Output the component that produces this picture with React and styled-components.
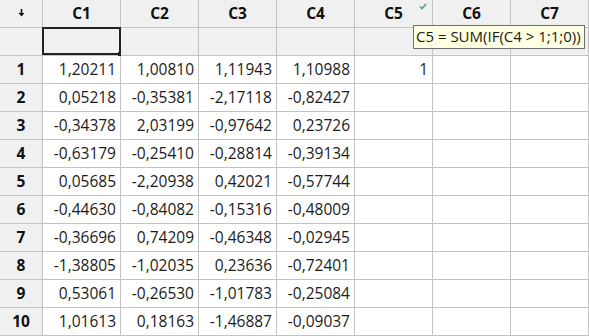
import React from "react";
import styled, { createGlobalStyle } from "styled-components";

const GlobalStyle = createGlobalStyle`
  html, body {
    margin: 0;
    padding: 0;
    background: #ffffff;
  }
  body {
    font-family: "Open Sans", "Noto Sans", sans-serif;
  }
`;

const Sheet = styled.div`
  position: relative;
  width: 589px;
  height: 336px;
  overflow: hidden;
  background: #ffffff;
`;

const Grid = styled.div`
  display: grid;
  grid-template-columns: 43px repeat(7, 78px) 1fr;
  grid-auto-rows: 28px;
`;

const Cell = styled.div`
  position: relative;
  box-sizing: border-box;
  border-right: 1px solid #c3c3c3;
  border-bottom: 1px solid #c3c3c3;
  background: ${(p) => (p.$gray ? "#f0f0f0" : "#ffffff")};
  display: flex;
  align-items: center;
  justify-content: ${(p) => (p.$center ? "center" : "flex-end")};
  padding: ${(p) => (p.$center ? "0 0 1px 0" : "0 4px 1px 0")};
  font-size: 15.5px;
  color: #1b1b1b;
  white-space: nowrap;
`;

const HeadCell = styled(Cell)`
  font-weight: 700;
  font-size: 15.5px;
  color: #111111;
`;

const Check = styled.svg`
  position: absolute;
  top: 3px;
  right: 5px;
`;

const Selection = styled.div`
  position: absolute;
  left: -1px;
  top: -1px;
  width: 79px;
  height: 28px;
  box-sizing: border-box;
  border: 2px solid #222222;
`;

const Handle = styled.div`
  position: absolute;
  right: -3px;
  bottom: -3px;
  width: 4px;
  height: 4px;
  background: #222222;
`;

const Tooltip = styled.div`
  position: absolute;
  left: 413px;
  top: 25px;
  padding: 0 3px 0 2px;
  height: 22px;
  line-height: 21px;
  background: #ffffe1;
  border: 1px solid #6e6e6e;
  font-size: 15px;
  color: #1b1b1b;
  white-space: nowrap;
`;

const columns = ["C1", "C2", "C3", "C4", "C5", "C6", "C7"];

const data = [
  ["1,20211", "1,00810", "1,11943", "1,10988", "1"],
  ["0,05218", "-0,35381", "-2,17118", "-0,82427"],
  ["-0,34378", "2,03199", "-0,97642", "0,23726"],
  ["-0,63179", "-0,25410", "-0,28814", "-0,39134"],
  ["0,05685", "-2,20938", "0,42021", "-0,57744"],
  ["-0,44630", "-0,84082", "-0,15316", "-0,48009"],
  ["-0,36696", "0,74209", "-0,46348", "-0,02945"],
  ["-1,38805", "-1,02035", "0,23636", "-0,72401"],
  ["0,53061", "-0,26530", "-1,01783", "-0,25084"],
  ["1,01613", "0,18163", "-1,46887", "-0,09037"],
];

const App = () => {
  return (
    <>
      <GlobalStyle />
      <Sheet>
        <Grid>
          <HeadCell $gray $center>
            <svg width="7" height="8" viewBox="0 0 7 8">
              <path d="M3.5 0 V5" stroke="#111" strokeWidth="1.6" />
              <path d="M0.5 4 L6.5 4 L3.5 7.5 Z" fill="#111" />
            </svg>
          </HeadCell>
          {columns.map((c) => (
            <HeadCell key={c} $gray $center>
              {c}
              {c === "C5" && (
                <Check width="8" height="7" viewBox="0 0 8 7">
                  <path d="M1 3.5 L3 5.5 L7 1" fill="none" stroke="#5e9c80" strokeWidth="1.6" />
                </Check>
              )}
            </HeadCell>
          ))}
          <HeadCell $gray $center />

          <HeadCell $gray $center />
          {columns.map((c) => (
            <Cell key={c} $gray>
              {c === "C1" && (
                <Selection>
                  <Handle />
                </Selection>
              )}
            </Cell>
          ))}
          <Cell $gray />

          {data.map((row, i) => (
            <React.Fragment key={i}>
              <HeadCell $gray $center>{i + 1}</HeadCell>
              {columns.map((c, j) => (
                <Cell key={c}>{row[j] || ""}</Cell>
              ))}
              <Cell />
            </React.Fragment>
          ))}
        </Grid>
        <Tooltip>C5 = SUM(IF(C4 &gt; 1;1;0))</Tooltip>
      </Sheet>
    </>
  );
};

export default App;
